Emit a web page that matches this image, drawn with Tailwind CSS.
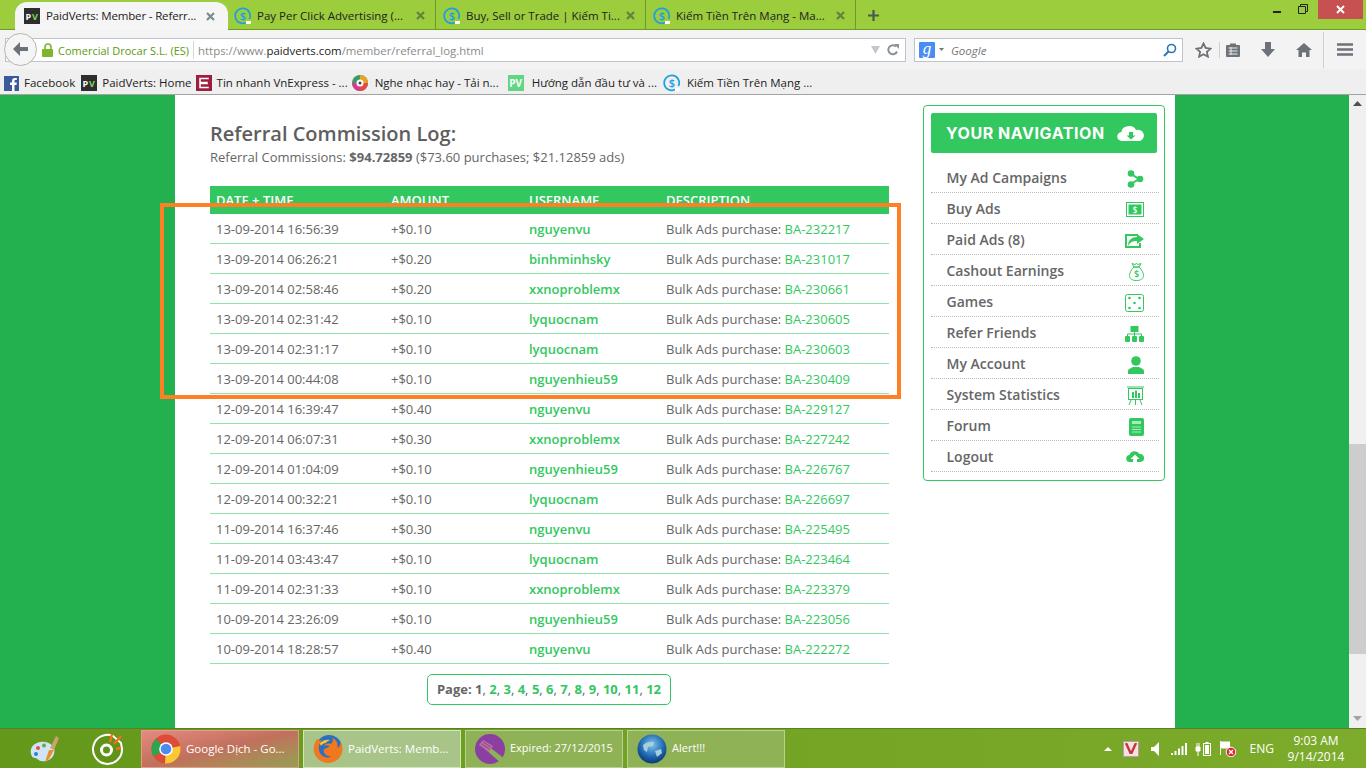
<!DOCTYPE html>
<html lang="en">
<head>
  <meta charset="UTF-8" />
  <meta name="viewport" content="width=device-width, initial-scale=1" />
  <title>PaidVerts: Member - Referral Log</title>
  <script src="https://cdn.jsdelivr.net/npm/@tailwindcss/browser@4"></script>
</head>
<body class="h-[768px] w-[1366px] overflow-hidden flex flex-col bg-white font-['Open_Sans',sans-serif]">

  <!-- Tab strip -->
  <div class="h-[30px] shrink-0 flex items-start bg-[#9bcd3c] border-b border-[#6f9a2a] text-[11.5px] text-[#222] relative">
    <div class="ml-[15px] mt-[2px] w-[213px] h-[28px] bg-[#f5f5f5] rounded-t-[12px] flex items-center pl-[9px] pr-[13px] gap-[6px] z-10">
      <svg class="w-[16px] h-[16px] shrink-0" viewBox="0 0 16 16"><rect width="16" height="16" fill="#2e2e2e"/><text x="1.5" y="12" font-size="9" font-weight="700" fill="#fff" font-family="Open Sans">P</text><text x="8" y="12" font-size="9" font-weight="700" fill="#7ed957" font-family="Open Sans">V</text></svg>
      <span class="flex-1 whitespace-nowrap tracking-[-0.15px]">PaidVerts: Member - Referr...</span>
      <svg class="w-[9px] h-[9px]" viewBox="0 0 9 9"><path d="M1 1l7 7M8 1l-7 7" stroke="#7b8a93" stroke-width="2.2"/></svg>
    </div>
    <div class="w-[208px] h-[29px] pt-[2px] pl-[6px] pr-[10px] flex items-center gap-[5px] border-r border-[#6f9a2a]">
      <svg class="w-[18px] h-[18px] shrink-0" viewBox="0 0 18 18"><path d="M15.5 12A7.5 7.5 0 1 0 12 15.6" fill="none" stroke="#1e9fe0" stroke-width="1.7"/><text x="9" y="13" text-anchor="middle" font-size="11" font-weight="600" fill="#1e9fe0" font-family="Open Sans">$</text><rect x="12" y="14" width="5" height="3" fill="#fff"/></svg>
      <span class="flex-1 whitespace-nowrap">Pay Per Click Advertising (...</span>
      <svg class="w-[9px] h-[9px]" viewBox="0 0 9 9"><path d="M1 1l7 7M8 1l-7 7" stroke="#65803f" stroke-width="2.2"/></svg>
    </div>
    <div class="w-[210px] h-[29px] pt-[2px] pl-[7px] pr-[10px] flex items-center gap-[5px] border-r border-[#6f9a2a]">
      <svg class="w-[18px] h-[18px] shrink-0" viewBox="0 0 18 18"><path d="M15.5 12A7.5 7.5 0 1 0 12 15.6" fill="none" stroke="#1e9fe0" stroke-width="1.7"/><text x="9" y="13" text-anchor="middle" font-size="11" font-weight="600" fill="#1e9fe0" font-family="Open Sans">$</text><rect x="12" y="14" width="5" height="3" fill="#fff"/></svg>
      <span class="flex-1 whitespace-nowrap">Buy, Sell or Trade | Kiếm Ti...</span>
      <svg class="w-[9px] h-[9px]" viewBox="0 0 9 9"><path d="M1 1l7 7M8 1l-7 7" stroke="#65803f" stroke-width="2.2"/></svg>
    </div>
    <div class="w-[210px] h-[29px] pt-[2px] pl-[7px] pr-[10px] flex items-center gap-[5px] border-r border-[#6f9a2a]">
      <svg class="w-[18px] h-[18px] shrink-0" viewBox="0 0 18 18"><path d="M15.5 12A7.5 7.5 0 1 0 12 15.6" fill="none" stroke="#1e9fe0" stroke-width="1.7"/><text x="9" y="13" text-anchor="middle" font-size="11" font-weight="600" fill="#1e9fe0" font-family="Open Sans">$</text><rect x="12" y="14" width="5" height="3" fill="#fff"/></svg>
      <span class="flex-1 whitespace-nowrap">Kiếm Tiền Trên Mạng - Ma...</span>
      <svg class="w-[9px] h-[9px]" viewBox="0 0 9 9"><path d="M1 1l7 7M8 1l-7 7" stroke="#65803f" stroke-width="2.2"/></svg>
    </div>
    <svg class="w-[11px] h-[11px] ml-[12px] mt-[10px]" viewBox="0 0 11 11"><path d="M5.5 0v11M0 5.5h11" stroke="#4a5a55" stroke-width="2.2"/></svg>
    <!-- window buttons -->
    <div class="ml-auto flex items-start h-[19px]">
      <div class="w-[8px] h-[2px] bg-[#222] mt-[11px] mr-[17px]"></div>
      <svg class="w-[10px] h-[10px] mt-[4px] mr-[10px]" viewBox="0 0 10 10"><path d="M2.5 2.5V.5h7v7h-2M.5 2.5h7v7h-7z" fill="none" stroke="#222"/></svg>
      <div class="w-[45px] h-[19px] mr-[3px] bg-[#c75050] flex items-center justify-center">
        <svg class="w-[9px] h-[9px]" viewBox="0 0 9 9"><path d="M1 1l7 7M8 1l-7 7" stroke="#fff" stroke-width="2"/></svg>
      </div>
    </div>
  </div>

  <!-- Navigation bar -->
  <div class="h-[39px] shrink-0 bg-[#f3f3f3] flex items-center pl-[4px] relative">
    <div class="w-[901px] h-[24px] ml-[1px] bg-white border border-[#bcc5cf] flex items-center relative">
      <div class="absolute left-[-2px] top-[-6px] w-[33px] h-[33px] rounded-full bg-[#f5f5f5] border border-[#b5b5b5] flex items-center justify-center">
        <svg class="w-[15px] h-[14px]" viewBox="0 0 15 14"><path d="M7 0L0 7l7 7V9h8V5H7z" fill="#6b7178"/></svg>
      </div>
      <svg class="w-[12px] h-[14px] ml-[36px] shrink-0" viewBox="0 0 12 14"><path d="M3 6V4a3 3 0 0 1 6 0v2" fill="none" stroke="#7fb528" stroke-width="1.6"/><rect y="6" width="11" height="8" rx="1" fill="#7fb528"/></svg>
      <span class="ml-[4px] mt-[3px] text-[11px] text-[#5c9a12] whitespace-nowrap">Comercial Drocar S.L. (ES)</span>
      <div class="w-px h-[18px] bg-[#d5d5d5] ml-[4px]"></div>
      <span class="ml-[4px] mt-[3px] text-[11.4px] text-[#8a8a8a] whitespace-nowrap">https://www.<span class="text-[#222]">paidverts.com</span>/member/referral_log.html</span>
      <svg class="w-[9px] h-[8px] ml-auto" viewBox="0 0 9 8"><path d="M0 0h9L4.5 8z" fill="#c3c8cc"/></svg>
      <svg class="w-[12px] h-[12px] ml-[7px] mr-[6px]" viewBox="0 0 12 12"><path d="M10 7.5A4.5 4.5 0 1 1 9 2.5" fill="none" stroke="#8c9196" stroke-width="2"/><path d="M7 0h5v5z" fill="#8c9196"/></svg>
    </div>
    <div class="w-[269px] h-[24px] ml-[8px] bg-white border border-[#bcc5cf] flex items-center pl-[4px]">
      <div class="w-[16px] h-[16px] bg-[#4a8cf0] rounded-[1px] text-white text-[17px] leading-[13px] text-center font-['Liberation_Serif',serif] italic">g</div>
      <svg class="w-[5px] h-[3px] ml-[4px]" viewBox="0 0 5 3"><path d="M0 0h5L2.5 3z" fill="#777"/></svg>
      <span class="ml-[7px] mt-[3px] text-[11.5px] italic text-[#777]">Google</span>
      <svg class="w-[14px] h-[14px] ml-auto mr-[5px]" viewBox="0 0 14 14"><circle cx="8.5" cy="5.5" r="4" fill="none" stroke="#2b74b8" stroke-width="1.6"/><path d="M5.5 8.5L1 13" stroke="#2b74b8" stroke-width="2"/></svg>
    </div>
    <svg class="w-[17px] h-[16px] ml-[12px]" viewBox="0 0 17 16"><path d="M8.5 1.5l2.1 4.5 4.9.6-3.6 3.3 1 4.8-4.4-2.4-4.4 2.4 1-4.8-3.600-3.300 4.900-.6z" fill="none" stroke="#6d7278" stroke-width="1.8"/></svg>
    <div class="w-px h-[16px] bg-[#cfcfcf] ml-[7px]"></div>
    <svg class="w-[14px] h-[15px] ml-[6px]" viewBox="0 0 14 15"><path d="M1 3h3V1.5h6V3h3a1 1 0 0 1 1 1v10a1 1 0 0 1-1 1H1a1 1 0 0 1-1-1V4a1 1 0 0 1 1-1z" fill="#6d7278"/><path d="M2.5 6h9M2.5 9h9M2.5 12h9M5 5v8" stroke="#eee"/></svg>
    <svg class="w-[14px] h-[15px] ml-[21px]" viewBox="0 0 14 15"><path d="M4 0h6v7h4l-7 8-7-8h4z" fill="#6d7278"/></svg>
    <svg class="w-[16px] h-[14px] ml-[21px]" viewBox="0 0 16 14"><path d="M8 0L0 7h2.5v7H6V9.5h4V14h3.500V7H16z" fill="#6d7278"/></svg>
    <div class="w-px h-[36px] bg-[#cfcfcf] ml-[11px]"></div>
    <svg class="w-[16px] h-[13px] ml-[13px]" viewBox="0 0 16 13"><path d="M0 1.5h16M0 6.5h16M0 11.5h16" stroke="#6d7278" stroke-width="2.6"/></svg>
  </div>

  <!-- Bookmarks bar -->
  <div class="h-[26px] shrink-0 pt-[3px] bg-[#efefef] border-b border-[#a3a3a3] flex items-center pl-[4px] text-[11.5px] text-[#222] whitespace-nowrap">
    <svg class="w-[15px] h-[15px]" viewBox="0 0 15 15"><rect width="15" height="15" fill="#3b5a9b"/><path d="M10.5 15V9h2l.3-2.4h-2.3V5.200c0-.7.2-1.100 1.200-1.100h1.100V2a13 13 0 0 0-1.700-.1C9 1.900 8 3 8 5v1.600H6V9h2v6z" fill="#fff"/></svg>
    <span class="ml-[5px]">Facebook</span>
    <svg class="w-[16px] h-[16px] ml-[6px]" viewBox="0 0 16 16"><rect width="16" height="16" fill="#2e2e2e"/><text x="1.5" y="12" font-size="9" font-weight="700" fill="#fff" font-family="Open Sans">P</text><text x="8" y="12" font-size="9" font-weight="700" fill="#7ed957" font-family="Open Sans">V</text></svg>
    <span class="ml-[5px]">PaidVerts: Home</span>
    <svg class="w-[16px] h-[16px] ml-[4px]" viewBox="0 0 16 16"><rect width="16" height="16" fill="#9c1f3f"/><path d="M3 2.5h10v2H5v2h7v3H5v2h8v2H3z" fill="#fff" stroke="#9c1f3f" stroke-width=".5"/></svg>
    <span class="ml-[5px]">Tin nhanh VnExpress - ...</span>
    <svg class="w-[16px] h-[16px] ml-[4px]" viewBox="0 0 16 16"><circle cx="8" cy="8" r="8" fill="#3a9b63"/><path d="M8 8V0a8 8 0 0 1 8 8z" fill="#f0a020"/><path d="M8 8h8a8 8 0 0 1-8 8z" fill="#e8464a"/><path d="M8 8v8a8 8 0 0 1-8-8z" fill="#d83a8c"/><circle cx="8" cy="8" r="3.5" fill="#fff"/><circle cx="8" cy="8" r="1.5" fill="#444"/></svg>
    <span class="ml-[7px]">Nghe nhạc hay - Tải n...</span>
    <div class="w-[16px] h-[16px] ml-[9px] bg-[#5ed684] text-white text-[10px] font-bold leading-[16px] text-center">PV</div>
    <span class="ml-[8px]">Hướng dẫn đầu tư và ...</span>
    <svg class="w-[18px] h-[18px] ml-[6px]" viewBox="0 0 18 18"><path d="M15.5 12A7.5 7.5 0 1 0 12 15.6" fill="none" stroke="#1e9fe0" stroke-width="1.7"/><text x="9" y="13" text-anchor="middle" font-size="11" font-weight="600" fill="#1e9fe0" font-family="Open Sans">$</text><rect x="12" y="14" width="5" height="3" fill="#fff"/></svg>
    <span class="ml-[6px]">Kiếm Tiền Trên Mạng ...</span>
  </div>

  <!-- Page -->
  <div class="flex-1 min-h-0 relative flex bg-[#23b04e] overflow-hidden">
    <div class="ml-[175px] w-[1000px] bg-white pl-[35px] flex items-start gap-[34px] text-[#666]">
      <div class="w-[679px] shrink-0">
        <h1 class="mt-[25px] text-[20px] leading-[28px] font-semibold text-[#5e5e5e]">Referral Commission Log:</h1>
        <p class="text-[13px] leading-[18px] text-[#666]">Referral Commissions: <b class="font-bold">$94.72859</b> ($73.60 purchases; $21.12859 ads)</p>

        <table class="mt-[20px] w-full table-fixed border-separate border-spacing-0 text-[13px] text-[#666] [&_td]:h-[30px] [&_td]:pl-[6px] [&_td]:pt-[3px] [&_td]:border-b [&_td]:border-[#90e4aa] [&_th]:pl-[6px] [&_th]:pt-[2px] [&_a]:text-[#33c85f]">
          <colgroup><col class="w-[175px]"/><col class="w-[138px]"/><col class="w-[137px]"/><col/></colgroup>
          <thead>
            <tr class="h-[28px] bg-[#33c85f] text-white text-left text-[13px]">
              <th class="font-semibold">DATE + TIME</th><th class="font-semibold">AMOUNT</th><th class="font-semibold">USERNAME</th><th class="font-semibold">DESCRIPTION</th>
            </tr>
          </thead>
          <tbody>
            <tr><td>13-09-2014 16:56:39</td><td>+$0.10</td><td><a class="font-semibold">nguyenvu</a></td><td>Bulk Ads purchase: <a>BA-232217</a></td></tr>
            <tr><td>13-09-2014 06:26:21</td><td>+$0.20</td><td><a class="font-semibold">binhminhsky</a></td><td>Bulk Ads purchase: <a>BA-231017</a></td></tr>
            <tr><td>13-09-2014 02:58:46</td><td>+$0.20</td><td><a class="font-semibold">xxnoproblemx</a></td><td>Bulk Ads purchase: <a>BA-230661</a></td></tr>
            <tr><td>13-09-2014 02:31:42</td><td>+$0.10</td><td><a class="font-semibold">lyquocnam</a></td><td>Bulk Ads purchase: <a>BA-230605</a></td></tr>
            <tr><td>13-09-2014 02:31:17</td><td>+$0.10</td><td><a class="font-semibold">lyquocnam</a></td><td>Bulk Ads purchase: <a>BA-230603</a></td></tr>
            <tr><td>13-09-2014 00:44:08</td><td>+$0.10</td><td><a class="font-semibold">nguyenhieu59</a></td><td>Bulk Ads purchase: <a>BA-230409</a></td></tr>
            <tr><td>12-09-2014 16:39:47</td><td>+$0.40</td><td><a class="font-semibold">nguyenvu</a></td><td>Bulk Ads purchase: <a>BA-229127</a></td></tr>
            <tr><td>12-09-2014 06:07:31</td><td>+$0.30</td><td><a class="font-semibold">xxnoproblemx</a></td><td>Bulk Ads purchase: <a>BA-227242</a></td></tr>
            <tr><td>12-09-2014 01:04:09</td><td>+$0.10</td><td><a class="font-semibold">nguyenhieu59</a></td><td>Bulk Ads purchase: <a>BA-226767</a></td></tr>
            <tr><td>12-09-2014 00:32:21</td><td>+$0.10</td><td><a class="font-semibold">lyquocnam</a></td><td>Bulk Ads purchase: <a>BA-226697</a></td></tr>
            <tr><td>11-09-2014 16:37:46</td><td>+$0.30</td><td><a class="font-semibold">nguyenvu</a></td><td>Bulk Ads purchase: <a>BA-225495</a></td></tr>
            <tr><td>11-09-2014 03:43:47</td><td>+$0.10</td><td><a class="font-semibold">lyquocnam</a></td><td>Bulk Ads purchase: <a>BA-223464</a></td></tr>
            <tr><td>11-09-2014 02:31:33</td><td>+$0.10</td><td><a class="font-semibold">xxnoproblemx</a></td><td>Bulk Ads purchase: <a>BA-223379</a></td></tr>
            <tr><td>10-09-2014 23:26:09</td><td>+$0.10</td><td><a class="font-semibold">nguyenhieu59</a></td><td>Bulk Ads purchase: <a>BA-223056</a></td></tr>
            <tr><td>10-09-2014 18:28:57</td><td>+$0.40</td><td><a class="font-semibold">nguyenvu</a></td><td>Bulk Ads purchase: <a>BA-222272</a></td></tr>
          </tbody>
        </table>

        <div class="mt-[10px] ml-[217px] w-[244px] h-[31px] border border-[#33c85f] rounded-[5px] flex items-center justify-center text-[13px] font-bold text-[#666] [&_a]:text-[#33c85f]">
          <span>Page: 1<span class="font-normal">,</span> <a>2</a><span class="font-normal">,</span> <a>3</a><span class="font-normal">,</span> <a>4</a><span class="font-normal">,</span> <a>5</a><span class="font-normal">,</span> <a>6</a><span class="font-normal">,</span> <a>7</a><span class="font-normal">,</span> <a>8</a><span class="font-normal">,</span> <a>9</a><span class="font-normal">,</span> <a>10</a><span class="font-normal">,</span> <a>11</a><span class="font-normal">,</span> <a>12</a></span>
        </div>
      </div>

      <!-- Sidebar -->
      <div class="mt-[10px] w-[242px] h-[376px] shrink-0 border border-[#33c85f] rounded-[4px] pt-[7px] pl-[7px] pr-[5px]">
        <div class="w-[226px] h-[40px] bg-[#33c85f] rounded-[2px] flex items-center pl-[15px] pr-[12px] text-white text-[16px] font-bold tracking-[0.55px] font-['Inter',sans-serif]">
          YOUR NAVIGATION
          <svg class="w-[28px] h-[15px] ml-auto" viewBox="0 0 28 15"><path d="M5 15a4.5 4.5 0 0 1-.5-9A7.5 6 0 0 1 19 4a5.500 5.500 0 0 1 4 11z" fill="#fff"/><path d="M12 6h4v3.5h2.500L14 13.5 9.500 9.500H12z" fill="#33c85f"/></svg>
        </div>
        <ul class="mt-[9px] text-[14px] font-semibold text-[#666] [&_li]:h-[31px] [&_li]:flex [&_li]:items-center [&_li]:justify-between [&_li]:pl-[15.5px] [&_li]:pr-[15px] [&_li]:border-b [&_li]:border-dotted [&_li]:border-[#bbb] [&_svg]:mt-[3px]">
          <li>My Ad Campaigns
            <svg class="w-[18px] h-[18px]" viewBox="0 0 18 18" fill="#33c85f"><path d="M5 4l8 5-8 5" fill="none" stroke="#33c85f" stroke-width="2"/><circle cx="5" cy="3.5" r="3.3"/><circle cx="14" cy="9" r="3.3"/><circle cx="5" cy="14.5" r="3.3"/></svg>
          </li>
          <li>Buy Ads
            <svg class="w-[18px] h-[15px]" viewBox="0 0 18 15"><rect x=".5" y=".5" width="17" height="14" fill="none" stroke="#33c85f"/><rect x="2.5" y="2.5" width="13" height="10" fill="#33c85f"/><text x="9" y="11" text-anchor="middle" font-size="8" fill="#fff" font-family="Open Sans">$</text></svg>
          </li>
          <li>Paid Ads (8)
            <svg class="w-[19px] h-[14px]" viewBox="0 0 19 14"><path d="M13 1H1v12h14V9" fill="none" stroke="#33c85f" stroke-width="2"/><path d="M12 0l7 5-7 5V7C8 7 5 8 3 12c0-6 4-9 9-9z" fill="#33c85f"/></svg>
          </li>
          <li>Cashout Earnings
            <svg class="w-[15px] h-[19px]" viewBox="0 0 15 19" fill="none" stroke="#33c85f"><path d="M5 5L3 1.5l3 1 1.5-1 1.5 1 3-1L10 5z"/><path d="M5 5C2 8 .5 11 .5 13.5c0 3 2.5 5 7 5s7-2 7-5c0-2.5-1.500-5.500-4.500-8.500z"/><text x="7.5" y="15" text-anchor="middle" font-size="9" fill="#33c85f" stroke="none" font-family="Open Sans">$</text></svg>
          </li>
          <li>Games
            <svg class="w-[19px] h-[18px]" viewBox="0 0 19 18" fill="#33c85f"><rect x=".5" y=".5" width="18" height="17" rx="2" fill="none" stroke="#33c85f"/><circle cx="4.5" cy="4" r="1.3"/><circle cx="14.5" cy="4" r="1.3"/><circle cx="9.5" cy="9" r="1.3"/><circle cx="4.5" cy="14" r="1.3"/><circle cx="14.5" cy="14" r="1.3"/></svg>
          </li>
          <li>Refer Friends
            <svg class="w-[19px] h-[16px]" viewBox="0 0 19 16" fill="#33c85f"><rect x="5.5" width="8" height="6"/><path d="M9.5 6v4M2.5 10V8h14v2" fill="none" stroke="#33c85f"/><rect y="10" width="5" height="6" rx="1"/><rect x="7" y="10" width="5" height="6" rx="1"/><rect x="14" y="10" width="5" height="6" rx="1"/></svg>
          </li>
          <li>My Account
            <svg class="w-[16px] h-[18px]" viewBox="0 0 16 18" fill="#33c85f"><circle cx="8" cy="5" r="4.8"/><path d="M0 18v-3c0-2 3-3 5-4h6c2 1 5 2 5 4v3z"/></svg>
          </li>
          <li>System Statistics
            <svg class="w-[17px] h-[19px]" viewBox="0 0 17 19"><path d="M0 1h17M4 14l-2 5M13 14l2 5M8.5 14v5" stroke="#33c85f" fill="none"/><rect x="1.5" y="2.5" width="14" height="11" fill="none" stroke="#33c85f"/><path d="M5 6h2v6H5zM8 4.5h2V12H8zM11 7h2v5h-2z" fill="#33c85f"/></svg>
          </li>
          <li>Forum
            <svg class="w-[15px] h-[18px]" viewBox="0 0 15 18"><rect width="15" height="18" rx="2" fill="#33c85f"/><path d="M3 3h9v3H3z" fill="#a6ebbc"/><path d="M3 9h9M3 11.5h9M3 14h9" stroke="#a6ebbc"/></svg>
          </li>
          <li>Logout
            <svg class="w-[18px] h-[13px]" viewBox="0 0 18 13"><path d="M4 11a3.5 3.5 0 0 1-.5-7A5.5 5.5 0 0 1 13.5 3 4 4 0 0 1 14.5 11H11V8h2.500L9 3.5 4.5 8H7v3z" fill="#33c85f"/></svg>
          </li>
        </ul>
      </div>
    </div>

    <!-- Scrollbar -->
    <div class="ml-auto w-[17px] bg-[#f0f0f0] flex flex-col items-center">
      <svg class="w-[9px] h-[5px] mt-[6px]" viewBox="0 0 9 5"><path d="M0 5L4.5 0 9 5z" fill="#505050"/></svg>
      <div class="w-full h-[210px] bg-[#cdcdcd] mt-[338px]"></div>
      <svg class="w-[9px] h-[5px] mt-[62px]" viewBox="0 0 9 5"><path d="M0 0L4.5 5 9 0z" fill="#a3a3a3"/></svg>
    </div>

    <!-- Annotation drawn over the table -->
    <div class="absolute left-[160px] top-[108px] w-[741px] h-[196px] border-[4px] border-[#ff7f27]"></div>
  </div>

  <!-- Windows taskbar -->
  <div class="h-[40px] shrink-0 bg-gradient-to-r from-[#64981a] via-[#72a322] to-[#7dab2c] border-t border-[#5a7f24] flex items-center relative text-white text-[11.5px] whitespace-nowrap">
    <svg class="w-[32px] h-[30px] ml-[29px]" viewBox="0 0 32 30"><path d="M2 20C0 12 8 7 16 8c7 1 11 6 9 12-2 6-8 8-13 7-3-.5-4-3-6-3-2 0-3-1-4-4z" fill="#cfe4f5"/><circle cx="9" cy="14" r="2" fill="#e05050"/><circle cx="15" cy="11.5" r="2" fill="#60b040"/><circle cx="7" cy="20" r="2" fill="#3080d0"/><path d="M20 16l-4 12 4-3 5-9z" fill="#e8902a"/><path d="M21 14l6-12 3 2-5 12z" fill="#c9a46a"/></svg>
    <svg class="w-[33px] h-[33px] ml-[30px]" viewBox="0 0 33 33"><path d="M22 4A14.5 14.5 0 1 0 31 17l-1-6z" fill="#5f9418" stroke="#fff" stroke-width="2"/><circle cx="15.5" cy="18" r="5" fill="none" stroke="#fff" stroke-width="3"/><path d="M19 10l2-8M23 12l7-8M25 17l5-1" stroke="#f37021" stroke-width="2.5"/></svg>
    <div class="ml-[17px] w-[158px] h-[38px] border border-[#e59a8a] bg-gradient-to-br from-[#e58a80] via-[#c0705c] to-[#90a050] flex items-center pl-[9px] gap-[5px]">
      <svg class="w-[30px] h-[30px] shrink-0" viewBox="0 0 30 30"><circle cx="15" cy="15" r="14.5" fill="#dd4b39"/><path d="M15 15L2.5 22.500A14.5 14.5 0 0 1 4.7 4.8z" fill="#2da44e"/><path d="M15 15l14.2-3A14.5 14.5 0 0 1 14 29.5z" fill="#fcc934"/><circle cx="15" cy="15" r="6.8" fill="#fff"/><circle cx="15" cy="15" r="5.3" fill="#4a8cf0"/></svg>
      <span>Google Dịch - Go...</span>
    </div>
    <div class="ml-[4px] w-[158px] h-[38px] border border-[#d5e4b8] bg-[#a8c488] flex items-center pl-[9px] gap-[5px]">
      <svg class="w-[30px] h-[30px] shrink-0" viewBox="0 0 30 30"><circle cx="16" cy="14" r="13" fill="#2a6fc0"/><path d="M9 3c-1 2-1 3 0 4-1 0-3-1-5-2-3 4-4 9-3 13 2 7 8 11 14 11 8 0 14-6 14.5-13 .2-3-.5-6-2-8 0 3-1 5-3 6 1-4-1-8-5-10 1 3 0 5-2 6-3-1-5 0-7 2 2-1 4-1 6 0-1 2-5 2-6 4 0 4 4 7 8 6-2 2-7 2-10-1C5 17 5 11 8 8c-.5-2 0-3.5 1-5z" fill="#f0791f"/><path d="M7 9c3-3 7-4 10-3-2 1-4 2-4 3-2 0-4 1-5 3-.5-1-1-2-1-3z" fill="#f7c531"/></svg>
      <span>PaidVerts: Memb...</span>
    </div>
    <div class="ml-[4px] w-[158px] h-[38px] border border-[#b9d08f] bg-[#8fb256] flex items-center pl-[9px] gap-[5px] text-[11px]">
      <svg class="w-[30px] h-[30px] shrink-0" viewBox="0 0 30 30"><circle cx="15" cy="15" r="15" fill="#8b3fa0"/><path d="M10 15l3-3 17 13-3 5z" fill="#8fb256"/><path d="M8 6l10 6-4 6-10-7z" fill="#b9739a"/><path d="M8 8l8 5M6.5 10l8 5" stroke="#8b3fa0"/></svg>
      <span>Expired: 27/12/2015</span>
    </div>
    <div class="ml-[4px] w-[158px] h-[38px] border border-[#b9d08f] bg-[#8fb256] flex items-center pl-[9px] gap-[5px] text-[11px]">
      <svg class="w-[30px] h-[30px] shrink-0" viewBox="0 0 30 30"><defs><radialGradient id="globe" cx="50%" cy="35%" r="70%"><stop offset="0" stop-color="#7fc4ee"/><stop offset=".6" stop-color="#1c66b0"/><stop offset="1" stop-color="#0a2f66"/></radialGradient></defs><circle cx="15" cy="15" r="14.5" fill="url(#globe)"/><path d="M6 11c3-3 8-4 11-3l-1 4-5 1-1 5-3-2zM18 17l6-2 1 4-5 4z" fill="#a8cfd8"/></svg>
      <span>Alert!!!</span>
    </div>

    <!-- Tray -->
    <div class="ml-auto flex items-center">
      <svg class="w-[8px] h-[4px]" viewBox="0 0 8 4"><path d="M0 4l4-4 4 4z" fill="#fff"/></svg>
      <div class="w-[16px] h-[16px] ml-[11px] bg-[#f3e3e3] border border-[#b8a0a0] flex items-center justify-center">
        <svg class="w-[12px] h-[11px]" viewBox="0 0 12 11"><path d="M1 0l5 11 5-11" fill="none" stroke="#c8353f" stroke-width="2.4"/></svg>
      </div>
      <svg class="w-[8px] h-[14px] ml-[12px]" viewBox="0 0 8 14"><path d="M0 5h3l5-5v14l-5-5H0z" fill="#fff"/></svg>
      <svg class="w-[16px] h-[12px] ml-[12px]" viewBox="0 0 16 12" fill="#fff"><rect y="10" width="2" height="2"/><rect x="3.5" y="8" width="2" height="4"/><rect x="7" y="5.5" width="2" height="6.5"/><rect x="10.5" y="3" width="2" height="9"/><rect x="14" width="2" height="12"/></svg>
      <svg class="w-[16px] h-[15px] ml-[8px]" viewBox="0 0 16 15"><path d="M1 6h4v4H1zM2 2v4M4 2v4M3 10v5" stroke="#fff" fill="#fff"/><rect x="8.5" y="2.5" width="7" height="12" fill="none" stroke="#fff"/><rect x="10" y="4" width="4" height="9" fill="#fff"/><rect x="10.5" y="1" width="3" height="1.5" fill="#fff"/></svg>
      <svg class="w-[17px] h-[16px] ml-[8px]" viewBox="0 0 17 16"><path d="M1.5 0v14" stroke="#fff"/><path d="M2 .5h9v7H2z" fill="#fff"/><circle cx="12" cy="11" r="4.8" fill="#d8262c" stroke="#fff"/><path d="M10 9l4 4M14 9l-4 4" stroke="#fff" stroke-width="1.4"/></svg>
      <span class="ml-[14px] text-[12px]">ENG</span>
      <div class="ml-[12px] mr-[20px] w-[60px] text-center text-[12px] leading-[16px]">9:03 AM<br/>9/14/2014</div>
    </div>
  </div>
</body>
</html>
